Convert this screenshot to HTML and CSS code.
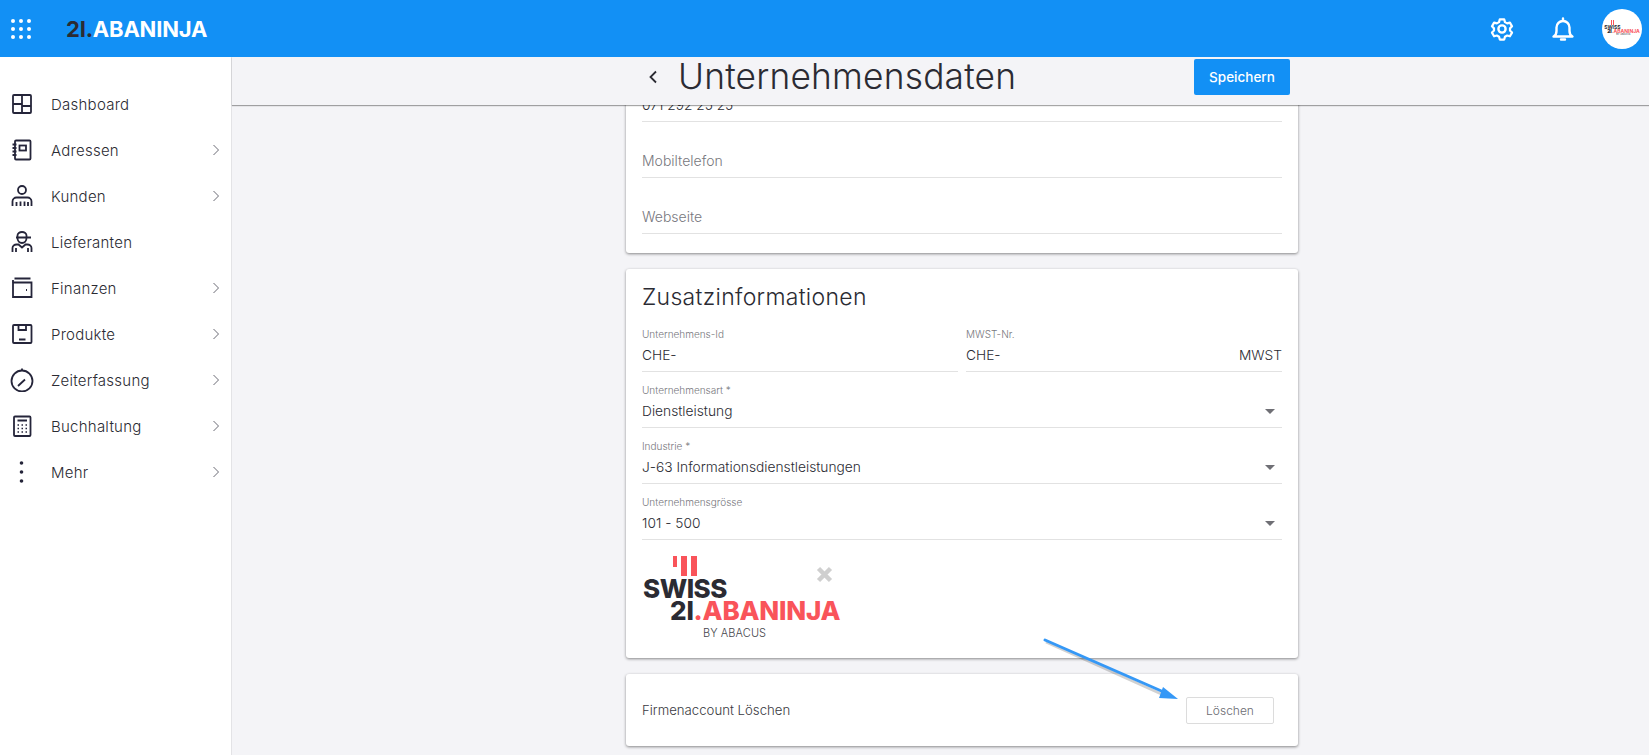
FILE: index.html
```html
<!DOCTYPE html>
<html>
<head>
    <title>Unternehmensdaten</title>
    <meta charset="utf-8">
    <link rel="stylesheet" href="styles.css">
</head>
<body>
    <div class="navbar">
        <svg class="apps" width="20" height="20" viewBox="0 0 20 20" fill="#fff">
            <circle cx="2" cy="2" r="2"/><circle cx="10" cy="2" r="2"/><circle cx="18" cy="2" r="2"/>
            <circle cx="2" cy="10" r="2"/><circle cx="10" cy="10" r="2"/><circle cx="18" cy="10" r="2"/>
            <circle cx="2" cy="18" r="2"/><circle cx="10" cy="18" r="2"/><circle cx="18" cy="18" r="2"/>
        </svg>
        <div class="brand"><span class="brand-num">2I.</span>ABANINJA</div>
        <div class="nav-right">
            <svg width="24" height="24" viewBox="0 0 24 24" fill="none" stroke="#fff" stroke-width="2.400" stroke-linejoin="round">
                <path d="M9.600 2h4.800l.8 3 2.400 1.400 3-.8 2.300 4-2.200 2.200v2.400l2.200 2.200-2.300 4-3-.8-2.400 1.400-.8 3H9.600l-.8-3-2.400-1.400-3 .8-2.300-4 2.200-2.200v-2.400L1.100 9.600l2.300-4 3 .8 2.400-1.400z" transform="translate(12 12) scale(.92) translate(-12 -12.500)"/>
                <circle cx="12" cy="12" r="3.600"/>
            </svg>
            <svg width="24" height="24" viewBox="0 0 24 24" fill="none" stroke="#fff" stroke-width="2.400" stroke-linecap="round" stroke-linejoin="round">
                <path d="M2.500 19.500c2-1 3-2.500 3-5.500v-3.500a6.500 6.500 0 0 1 13 0V14c0 3 1 4.500 3 5.500z"/>
                <path d="M10 22.500h4M12 1.500v2"/>
            </svg>
            <div class="avatar">
                <div class="mini-logo">
                    <div class="mini-bars"><i></i><i></i></div>
                    <div class="mini-swiss">SWISS</div>
                    <div class="mini-name"><b>2I</b><span>.ABANINJA</span></div>
                    <div class="mini-by">BY ABACUS</div>
                </div>
            </div>
        </div>
    </div>

    <div class="page">
        <div class="sidebar">
            <a class="side-item">
                <svg viewBox="0 0 22 22"><rect x="2" y="2" width="18" height="18" rx="1"/><path d="M11 2v18M2 11h9M11 13h9"/></svg>
                <span>Dashboard</span>
            </a>
            <a class="side-item">
                <svg viewBox="0 0 22 22"><rect x="4" y="1.500" width="15.500" height="19" rx="1"/><rect x="8.500" y="6.500" width="6.500" height="5"/><path d="M1.500 5.500h4M1.500 9h4M1.500 12.500h4M1.500 16h4"/></svg>
                <span>Adressen</span>
                <svg class="chev" viewBox="0 0 8 12"><path d="M1.500 1l5 5-5 5"/></svg>
            </a>
            <a class="side-item">
                <svg viewBox="0 0 22 22"><circle cx="11" cy="5" r="4"/><path d="M1.500 21v-4.500c0-2.300 2-4 4-4h11c2 0 4 1.700 4 4V21M5.500 17v4M9.500 16.500V21M13.500 16.500V21M17 17v4"/></svg>
                <span>Kunden</span>
                <svg class="chev" viewBox="0 0 8 12"><path d="M1.500 1l5 5-5 5"/></svg>
            </a>
            <a class="side-item">
                <svg viewBox="0 0 22 22"><path d="M6.500 6V4.500c0-2 2-3.500 4.500-3.500s4.500 1.500 4.500 3.500V6M5 6.500h15M6.500 7c0 3 2 5 4.500 5s4.500-2 4.500-5"/><path d="M1.500 21v-4c0-2 2-3.500 4-3.500h2l3.500 3 3.500-3h2c2 0 4 1.500 4 3.500v4M5 17v4M17 17v4"/></svg>
                <span>Lieferanten</span>
            </a>
            <a class="side-item">
                <svg viewBox="0 0 22 22"><path d="M3.500 1.500h16M2 5.500h18.500V20H2z"/><path d="M2 5.500V3"/><path d="M15 13h1" stroke-width="2"/></svg>
                <span>Finanzen</span>
                <svg class="chev" viewBox="0 0 8 12"><path d="M1.500 1l5 5-5 5"/></svg>
            </a>
            <a class="side-item">
                <svg viewBox="0 0 22 22"><rect x="2" y="2" width="18.500" height="18" rx="1"/><path d="M7.500 2v5h7.500V2M8 16.500h6.500"/></svg>
                <span>Produkte</span>
                <svg class="chev" viewBox="0 0 8 12"><path d="M1.500 1l5 5-5 5"/></svg>
            </a>
            <a class="side-item">
                <svg viewBox="0 0 24 24" class="big"><circle cx="12" cy="13" r="10.500"/><path d="M12 .5v2.500M8 18l7-6.500" /></svg>
                <span>Zeiterfassung</span>
                <svg class="chev" viewBox="0 0 8 12"><path d="M1.500 1l5 5-5 5"/></svg>
            </a>
            <a class="side-item">
                <svg viewBox="0 0 22 22"><rect x="3" y="1.500" width="16.500" height="19.500" rx="1"/><path d="M6.500 5.500h9.500" stroke-width="2"/><path d="M6.500 10h1.500M10.500 10H12M14.500 10H16M6.500 13.500h1.500M10.500 13.500H12M14.500 13.500H16M6.500 17h1.500M10.500 17H12M14.500 17H16" stroke-width="1.300"/></svg>
                <span>Buchhaltung</span>
                <svg class="chev" viewBox="0 0 8 12"><path d="M1.500 1l5 5-5 5"/></svg>
            </a>
            <a class="side-item">
                <svg viewBox="0 0 22 22" class="dots"><circle cx="10.500" cy="2" r="1.800"/><circle cx="10.500" cy="11" r="1.800"/><circle cx="10.500" cy="20" r="1.800"/></svg>
                <span>Mehr</span>
                <svg class="chev" viewBox="0 0 8 12"><path d="M1.500 1l5 5-5 5"/></svg>
            </a>
        </div>

        <div class="main">
            <div class="subheader">
                <svg class="back" width="10" height="14" viewBox="0 0 10 14"><path d="M8 1.500L2.500 7 8 12.500"/></svg>
                <h1>Unternehmensdaten</h1>
                <a class="btn-save">Speichern</a>
            </div>
            <div class="content">
                <div class="card card-top">
                    <div class="field"><div class="value">071 292 25 25</div></div>
                    <div class="field"><div class="hint">Mobiltelefon</div></div>
                    <div class="field"><div class="hint">Webseite</div></div>
                </div>

                <div class="card card-info">
                    <h2>Zusatzinformationen</h2>
                    <div class="two-col">
                        <div class="field">
                            <label>Unternehmens-Id</label>
                            <div class="value">CHE-</div>
                        </div>
                        <div class="field">
                            <label>MWST-Nr.</label>
                            <div class="value split"><span>CHE-</span><span>MWST</span></div>
                        </div>
                    </div>
                    <div class="field">
                        <label>Unternehmensart *</label>
                        <div class="value split"><span>Dienstleistung</span><i class="caret"></i></div>
                    </div>
                    <div class="field">
                        <label>Industrie *</label>
                        <div class="value split"><span>J-63 Informationsdienstleistungen</span><i class="caret"></i></div>
                    </div>
                    <div class="field">
                        <label>Unternehmensgrösse</label>
                        <div class="value split"><span>101 - 500</span><i class="caret"></i></div>
                    </div>
                    <div class="logo-box">
                        <div class="logo-bars"><i class="bar-short"></i><i></i><i></i></div>
                        <div class="logo-swiss">SWISS</div>
                        <div class="logo-name"><b>2I</b><span>.ABANINJA</span></div>
                        <div class="logo-by">BY ABACUS</div>
                        <svg class="logo-remove" width="17" height="17" viewBox="0 0 17 17"><path d="M2.500 2.500l12 12M14.500 2.500l-12 12"/></svg>
                    </div>
                </div>

                <div class="card card-delete">
                    <span>Firmenaccount Löschen</span>
                    <a class="btn-delete">Löschen</a>
                </div>
            </div>
        </div>
    </div>

    <svg class="arrow" width="150" height="75" viewBox="0 0 150 75">
        <path class="arrow-shadow" d="M4 5L126 60"/>
        <path class="arrow-line" d="M3 3L124 56"/>
        <path class="arrow-head" d="M121 50L136 62 117 61z"/>
    </svg>
</body>
</html>
```

FILE: styles.css
```css
body {
    font-family: Inter, "Noto Sans", sans-serif;
    background: #f4f4f7;
    color: #2b2b33;
    margin: 0;
    height: 755px;
    overflow: hidden;
    position: relative;
}
.navbar {
    height: 57px;
    background: #1290f5;
    display: flex;
    align-items: center;
    padding: 0 7px 0 11px;
}
.brand {
    margin-left: 35px;
    font-size: 22px;
    font-weight: 700;
    letter-spacing: -0.2px;
    color: #fff;
}
.brand-num {
    color: #2b2b33;
}
.nav-right {
    margin-left: auto;
    display: flex;
    align-items: center;
    gap: 37px;
}
.avatar {
    width: 40px;
    height: 40px;
    border-radius: 50%;
    background: #fff;
    display: flex;
    align-items: center;
    justify-content: center;
    margin-left: -10px;
    overflow: hidden;
}
.mini-logo {
    font-size: 5px;
    line-height: 4px;
    font-weight: 700;
}
.mini-bars {
    display: flex;
    gap: 1px;
    padding-left: 7px;
}
.mini-bars i {
    width: 1px;
    height: 5px;
    background: #f9545a;
}
.mini-name {
    padding-left: 3px;
}
.mini-name span {
    color: #f9545a;
}
.mini-by {
    font-size: 2.500px;
    font-weight: 400;
    padding-left: 12px;
}
.page {
    display: flex;
    height: 698px;
}
.sidebar {
    width: 231px;
    flex: none;
    background: #fff;
    border-right: 1px solid #e3e3e6;
    padding-top: 24px;
}
.side-item {
    height: 46px;
    display: flex;
    align-items: center;
    padding: 0 11px;
    font-size: 15px;
    font-weight: 350;
    letter-spacing: 0.25px;
}
.side-item svg {
    width: 22px;
    height: 22px;
    flex: none;
    fill: none;
    stroke: #25253a;
    stroke-width: 1.8;
}
.side-item svg.big {
    width: 24px;
    height: 24px;
    margin-left: -1px;
    margin-right: -1px;
}
.side-item svg.dots {
    fill: #25253a;
    stroke: none;
}
.side-item span {
    margin-left: 18px;
}
.side-item svg.chev {
    width: 8px;
    height: 12px;
    margin-left: auto;
    stroke: #6b6b75;
    stroke-width: 1;
}
.main {
    flex: 1;
    min-width: 0;
    display: flex;
    flex-direction: column;
}
.subheader {
    height: 48px;
    box-sizing: border-box;
    flex: none;
    display: flex;
    align-items: center;
    padding: 0 359px 8px 416px;
    box-shadow: 0 1px 1px rgba(0,0,0,0.35);
    position: relative;
    z-index: 2;
    background: #f4f4f7;
}
.back {
    fill: none;
    stroke: #2b2b33;
    stroke-width: 1.8;
}
.subheader h1 {
    font-size: 35.300px;
    line-height: 40px;
    font-weight: 300;
    letter-spacing: 0.2px;
    margin: 0 0 0 20px;
}
.btn-save {
    margin-left: auto;
    width: 96px;
    height: 36px;
    line-height: 36px;
    text-align: center;
    background: #1290f5;
    color: #fff;
    font-size: 13.500px;
    font-weight: 500;
    border-radius: 2px;
}
.content {
    flex: 1;
    overflow: hidden;
    padding: 0 351px 0 394px;
}
.card {
    background: #fff;
    border-radius: 3px;
    padding: 0 16px;
    margin-bottom: 16px;
    box-shadow: 0 1px 3px rgba(0,0,0,0.45);
}
.card-top {
    margin-top: -39px;
    padding-bottom: 19px;
}
.field {
    height: 56px;
    box-sizing: border-box;
    display: flex;
    flex-direction: column;
    justify-content: flex-end;
    padding-bottom: 6px;
    border-bottom: 1px solid #e2e2e2;
}
.field label {
    font-size: 10px;
    line-height: 14px;
    font-weight: 300;
    color: #77777d;
    margin-bottom: 4px;
}
.value {
    font-size: 13.750px;
    line-height: 20px;
    font-weight: 350;
}
.hint {
    font-size: 14px;
    line-height: 20px;
    font-weight: 300;
    color: #77777d;
}
.split {
    display: flex;
    justify-content: space-between;
    align-items: center;
}
.caret {
    width: 0;
    height: 0;
    margin-right: 7px;
    border-left: 5px solid transparent;
    border-right: 5px solid transparent;
    border-top: 5px solid #6f6f75;
}
.card-info h2 {
    font-size: 23px;
    line-height: 28px;
    font-weight: 300;
    letter-spacing: 0.3px;
    margin: 0;
    padding-top: 14px;
    height: 33px;
}
.two-col {
    display: grid;
    grid-template-columns: 1fr 1fr;
    gap: 8px;
}
.logo-box {
    position: relative;
    height: 118px;
    padding: 16px 0 0 1px;
    box-sizing: border-box;
    font-weight: 800;
}
.logo-bars {
    display: flex;
    gap: 4px;
    padding-left: 30px;
    height: 22px;
    align-items: flex-start;
}
.logo-bars i {
    width: 6px;
    height: 20px;
    background: #f9545a;
}
.logo-bars .bar-short {
    width: 4px;
    height: 11px;
}
.logo-swiss {
    font-size: 26px;
    line-height: 22px;
    letter-spacing: -0.5px;
}
.logo-name {
    font-size: 26px;
    line-height: 22px;
    padding-left: 27px;
    letter-spacing: -0.2px;
}
.logo-name b {
    font-weight: 800;
}
.logo-name span {
    color: #f9545a;
}
.logo-by {
    font-size: 11px;
    line-height: 14px;
    font-weight: 300;
    letter-spacing: 0.1px;
    color: #45454b;
    padding: 4px 0 0 60px;
}
.logo-remove {
    position: absolute;
    left: 174px;
    top: 26px;
    fill: none;
    stroke: #cfcfcf;
    stroke-width: 4.500;
}
.card-delete {
    height: 72px;
    display: flex;
    align-items: center;
    justify-content: space-between;
    padding: 0 24px 0 16px;
    font-size: 13.200px;
    font-weight: 350;
    color: #3a3a42;
}
.btn-delete {
    width: 86px;
    height: 25px;
    line-height: 25px;
    text-align: center;
    border: 1px solid #dcdcdc;
    border-radius: 2px;
    font-size: 12px;
    color: #6b6b72;
}
.arrow {
    position: absolute;
    left: 1042px;
    top: 637px;
    fill: none;
}
.arrow-shadow {
    stroke: rgba(0,0,0,0.18);
    stroke-width: 3;
}
.arrow-line {
    stroke: #3598f6;
    stroke-width: 3;
    stroke-linecap: round;
}
.arrow-head {
    fill: #3598f6;
}
```
